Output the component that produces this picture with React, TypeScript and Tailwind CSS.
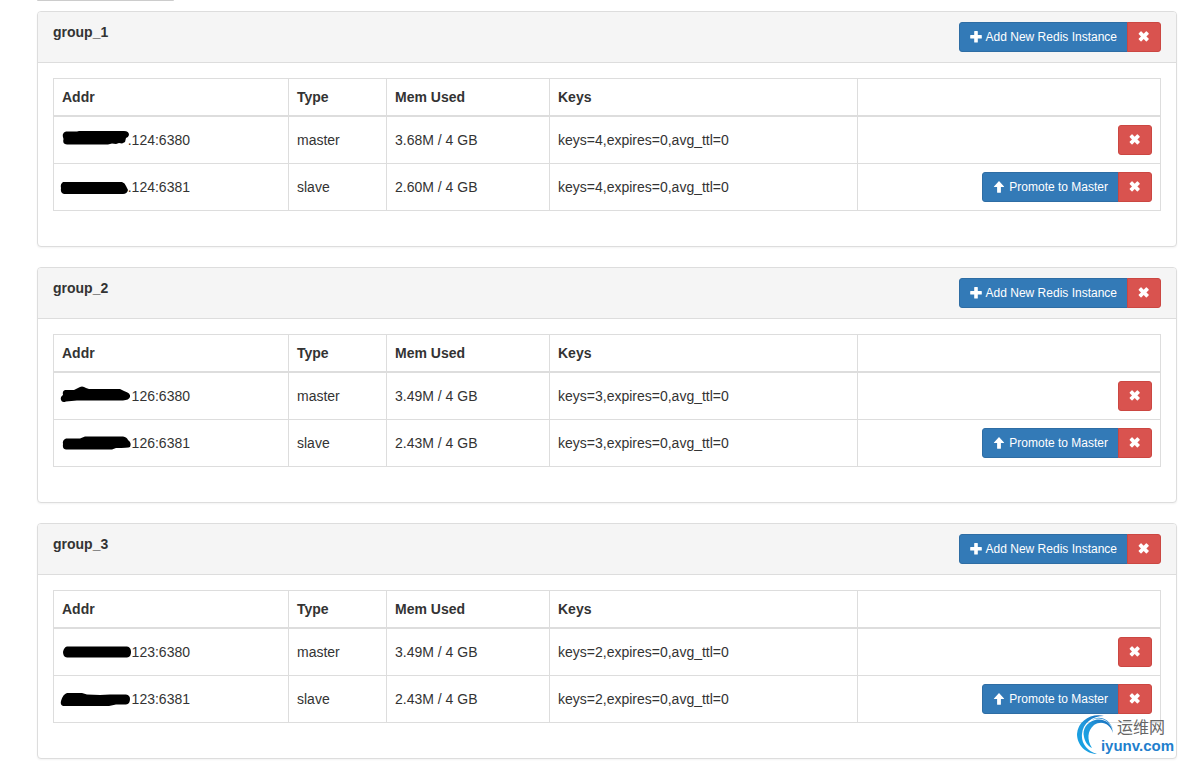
import React, { useState } from "react";

type Instance = {
  addr: string;
  type: "master" | "slave";
  mem: string;
  keys: string;
  mask: string;
};

type Group = { name: string; instances: Instance[] };

const initialGroups: Group[] = [
  {
    name: "group_1",
    instances: [
      {
        addr: ".124:6380",
        type: "master",
        mem: "3.68M / 4 GB",
        keys: "keys=4,expires=0,avg_ttl=0",
        mask: "M4 1.5 H15 L17 1 H62 Q67 1 67 5 Q66 8 64 8 L63 12 L60 13.500 L57 13 L54 14 L50 13.500 L46 14.500 H5 Q0 14 1.500 9 Q-1 3 4 1.5Z",
      },
      {
        addr: ".124:6381",
        type: "slave",
        mem: "2.60M / 4 GB",
        keys: "keys=4,expires=0,avg_ttl=0",
        mask: "M1 5 H60 Q63 6 64 9 L66 13 Q65 17 61 17 H2 Q-2 16 -1 11 Q-2 7 1 5Z",
      },
    ],
  },
  {
    name: "group_2",
    instances: [
      {
        addr: "126:6380",
        type: "master",
        mem: "3.49M / 4 GB",
        keys: "keys=3,expires=0,avg_ttl=0",
        mask: "M3 4 H12 L16 2 Q20 -1 24 2 L27 3 H58 L62 5 Q69 7 68 11 Q67 14 61 14.500 H15 L4 15.500 Q0 17 -1 14 Q-2 11 1 9 Q0 5 3 4Z",
      },
      {
        addr: "126:6381",
        type: "slave",
        mem: "2.43M / 4 GB",
        keys: "keys=3,expires=0,avg_ttl=0",
        mask: "M4 5.500 H18 L23 3.500 H61 Q65 4 66 7 Q70 10 68 14 Q66 15 54 15 L50 16.500 H4 Q0 16 1 11 Q0 7 4 5.500Z",
      },
    ],
  },
  {
    name: "group_3",
    instances: [
      {
        addr: "123:6380",
        type: "master",
        mem: "3.49M / 4 GB",
        keys: "keys=2,expires=0,avg_ttl=0",
        mask: "M5 4.500 H65 Q69 5 69 10 Q69 15 65 15.500 H5 Q1 15 1 10 Q2 5 5 4.500Z",
      },
      {
        addr: "123:6381",
        type: "slave",
        mem: "2.43M / 4 GB",
        keys: "keys=2,expires=0,avg_ttl=0",
        mask: "M5 4 H20 L25 5.500 L38 6 L48 5.500 H64 Q68 6 68 10 Q68 15 64 15.500 H54 L47 17 H1 Q-2 16 -1 12 Q1 5 5 4Z",
      },
    ],
  },
];

const headers = [
  { label: "Addr", width: "w-[235px]" },
  { label: "Type", width: "w-[98px]" },
  { label: "Mem Used", width: "w-[163px]" },
  { label: "Keys", width: "w-[308px]" },
  { label: "", width: "" },
];

function PlusIcon() {
  return (
    <svg className="size-3 shrink-0" viewBox="0 0 12 12" fill="currentColor">
      <path d="M4.700 0h2.600q.5 0 .5.5v3.500h3.500q.5 0 .5.5v2.600q0 .5-.5.5H7.800v3.500q0 .5-.5.5H4.700q-.5 0-.5-.5V7.600H.7q-.5 0-.5-.5V4.500q0-.5.5-.5h3.500V.5q0-.5.5-.5z" />
    </svg>
  );
}

function RemoveIcon() {
  return (
    <svg className="size-3 shrink-0" viewBox="0 0 12 12" fill="currentColor">
      <path d="M3.500 .5 5.700 2.700 7.900 .5q.5-.4.900 0l1.800 1.800q.4.4 0 .9L8.400 5.400 10.600 7.600q.4.5 0 .9L8.800 10.300q-.4.4-.9 0L5.700 8.100 3.500 10.300q-.5.4-.9 0L.8 8.500q-.4-.4 0-.9L3 5.400 .8 3.200q-.4-.5 0-.9L2.600 .5q.4-.4.9 0z" />
    </svg>
  );
}

function ArrowUpIcon() {
  return (
    <svg className="size-3 shrink-0" viewBox="0 0 12 12" fill="currentColor">
      <path d="M6 0 11 5.400q.4.600-.3.600H7.900v5.300q0 .5-.5.500H4.600q-.5 0-.5-.5V6H1.300q-.7 0-.3-.6z" />
    </svg>
  );
}

function PrimaryButton({
  title,
  icon,
}: {
  title: string;
  icon: React.ReactNode;
}) {
  return (
    <button
      type="button"
      className="flex items-center gap-1 rounded-l-[3px] border border-[#2e6da4] bg-[#337ab7] px-[10px] py-[5px] text-xs leading-[18px] text-white cursor-pointer hover:bg-[#286090]"
    >
      {icon}
      {title}
    </button>
  );
}

function RemoveButton({
  label,
  grouped,
  onClick,
}: {
  label: string;
  grouped: boolean;
  onClick: () => void;
}) {
  return (
    <button
      type="button"
      aria-label={label}
      onClick={onClick}
      className={`flex h-[30px] items-center border border-[#cb4742] bg-[#d9534f] px-[10px] text-white cursor-pointer hover:bg-[#c9302c] ${
        grouped ? "-ml-px rounded-r-[3px]" : "rounded-[3px]"
      }`}
    >
      <RemoveIcon />
    </button>
  );
}

function GroupPanel({
  group,
  onRemove,
  onRemoveInstance,
}: {
  group: Group;
  onRemove: () => void;
  onRemoveInstance: (addr: string) => void;
}) {
  return (
    <section className="rounded border border-[#ddd] bg-white shadow-xs">
      <div className="flex items-start justify-between rounded-t-[3px] border-b border-[#ddd] bg-[#f5f5f5] px-[15px] py-[10px]">
        <h3 className="font-bold">{group.name}</h3>
        <div className="flex">
          <PrimaryButton title="Add New Redis Instance" icon={<PlusIcon />} />
          <RemoveButton
            label={`Remove ${group.name}`}
            grouped
            onClick={onRemove}
          />
        </div>
      </div>
      <div className="px-[15px] pt-[15px] pb-[35px]">
        <table className="w-full table-fixed border-collapse border border-[#ddd]">
          <thead>
            <tr>
              {headers.map((h) => (
                <th
                  key={h.label}
                  className={`border border-b-2 border-[#ddd] p-2 text-left font-bold ${h.width}`}
                >
                  {h.label}
                </th>
              ))}
            </tr>
          </thead>
          <tbody>
            {group.instances.map((item) => (
              <tr key={item.addr}>
                <td className="border border-[#ddd] p-2">
                  <div className="relative flex w-32 justify-end">
                    {item.addr}
                    <svg
                      className="absolute left-0 top-0 h-5 w-[70px] overflow-visible"
                      viewBox="0 0 70 20"
                    >
                      <path d={item.mask} fill="#000" />
                    </svg>
                  </div>
                </td>
                <td className="border border-[#ddd] p-2">{item.type}</td>
                <td className="border border-[#ddd] p-2">{item.mem}</td>
                <td className="border border-[#ddd] p-2">{item.keys}</td>
                <td className="border border-[#ddd] p-2">
                  <div className="flex justify-end">
                    {item.type === "slave" && (
                      <PrimaryButton
                        title="Promote to Master"
                        icon={<ArrowUpIcon />}
                      />
                    )}
                    <RemoveButton
                      label={`Remove ${item.addr}`}
                      grouped={item.type === "slave"}
                      onClick={() => onRemoveInstance(item.addr)}
                    />
                  </div>
                </td>
              </tr>
            ))}
          </tbody>
        </table>
      </div>
    </section>
  );
}

function Watermark() {
  return (
    <div className="pointer-events-none absolute right-[6px] bottom-[7px] flex h-10 items-end">
      <svg className="-mr-4 h-10 w-10" viewBox="0 0 40 40">
        <defs>
          <linearGradient id="swirl" x1="0" y1="1" x2="1" y2="0">
            <stop offset="0" stopColor="#12a5e6" />
            <stop offset="0.5" stopColor="#2299dc" />
            <stop offset="1" stopColor="#1668b8" />
          </linearGradient>
        </defs>
        <g fill="url(#swirl)">
          <path d="M27 1C14-2 1 6 0 19C0 30 9 39 20 39C10 36 4 28 5 19C6 8 15 1 27 1Z" />
          <path d="M36 18C35 8 27 3 18 5C10 7 5 14 7 22C8 27 11 31 15 33C10 25 10 16 17 10C25 5 33 9 36 18Z" />
          <path d="M36 15C33 6 24 1 15 5C22 0 33 4 36 15Z" />
        </g>
      </svg>
      <div className="flex flex-col font-['Liberation_Sans','Noto_Sans_CJK_SC',sans-serif]">
        <span className="pl-4 text-base leading-[18px] text-[#666]">
          运维网
        </span>
        <span className="text-[15px] leading-[18px] font-bold text-[#1f7fcd]">
          iyunv.com
        </span>
      </div>
    </div>
  );
}

export default function App() {
  const [groups, setGroups] = useState(initialGroups);

  const removeGroup = (name: string) =>
    setGroups(groups.filter((g) => g.name !== name));

  const removeInstance = (name: string, addr: string) =>
    setGroups(
      groups.map((g) =>
        g.name === name
          ? { ...g, instances: g.instances.filter((i) => i.addr !== addr) }
          : g,
      ),
    );

  return (
    <main className="relative bg-white pr-[3px] pb-[3px] pl-[37px] font-['Liberation_Sans',Arial,sans-serif] text-sm leading-5 text-[#333]">
      <div className="mb-[10px] h-px w-[137px] rounded-b bg-[#ccc]" />
      <div className="flex flex-col gap-5">
        {groups.map((group) => (
          <GroupPanel
            key={group.name}
            group={group}
            onRemove={() => removeGroup(group.name)}
            onRemoveInstance={(addr) => removeInstance(group.name, addr)}
          />
        ))}
      </div>
      <Watermark />
    </main>
  );
}
